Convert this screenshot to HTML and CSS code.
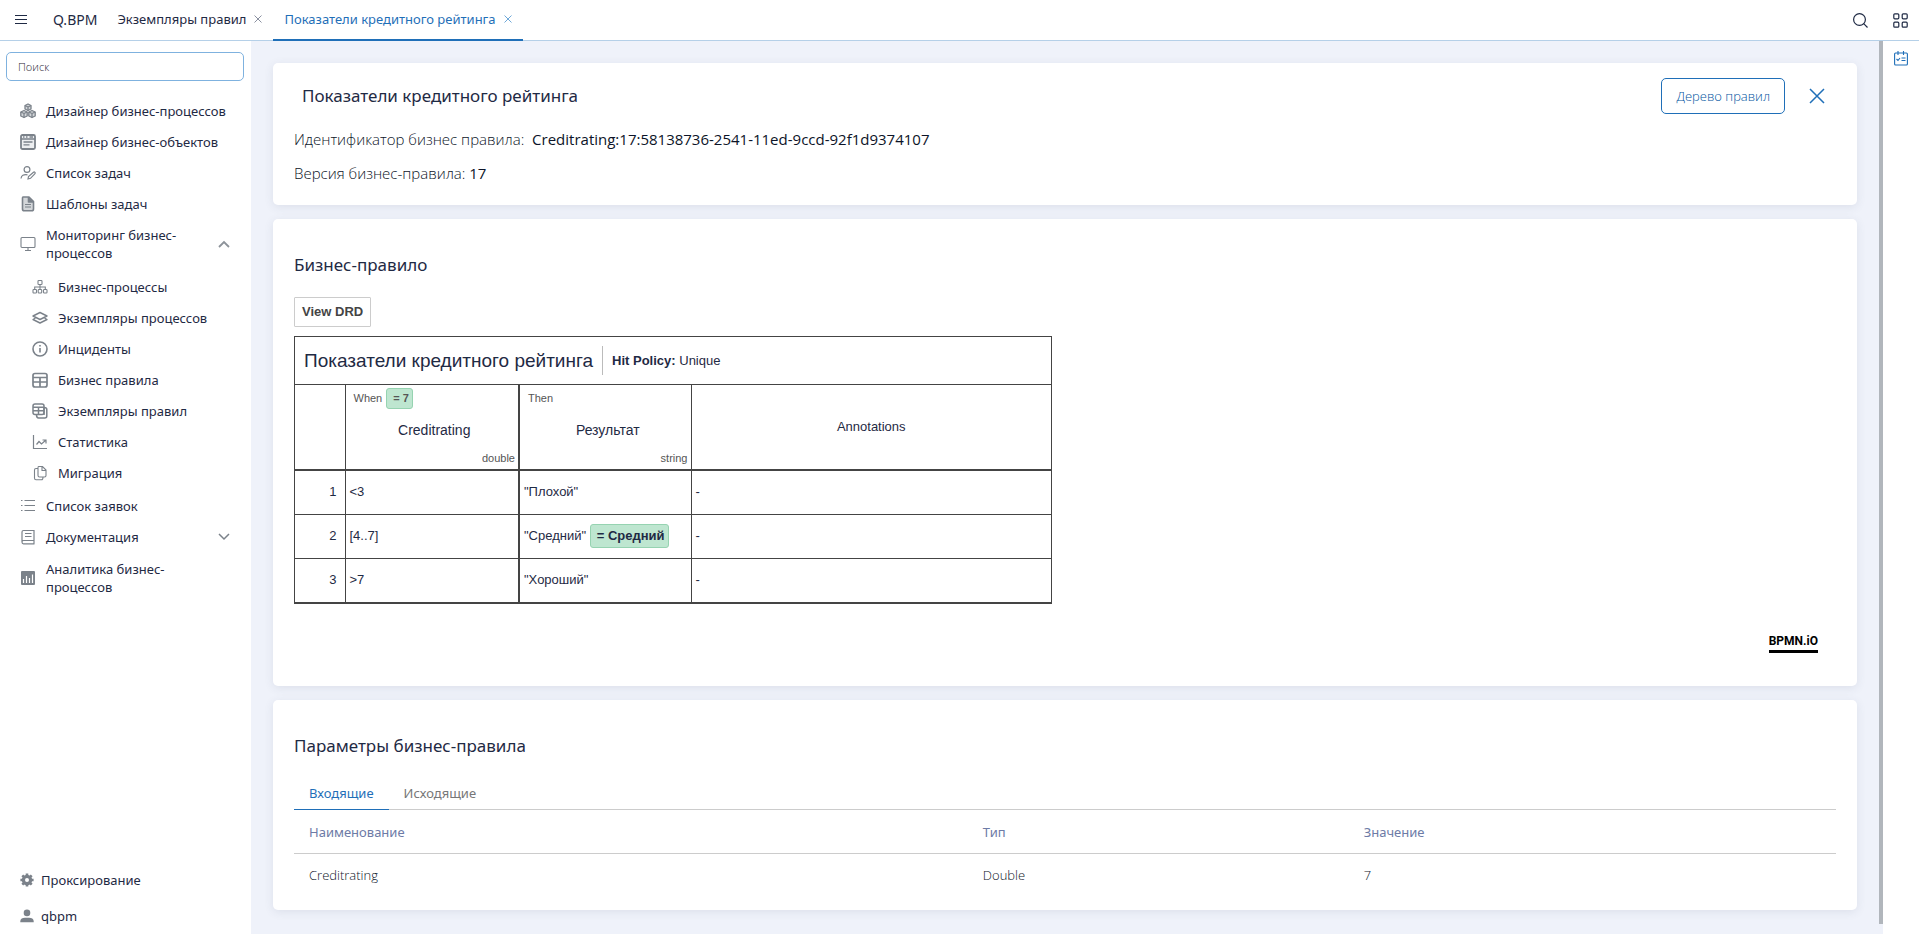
FILE: index.html
```html
<!DOCTYPE html>
<html lang="ru">
<head>
<meta charset="utf-8">
<title>Q.BPM</title>
<meta name="viewport" content="width=device-width, initial-scale=1">
<link rel="stylesheet" href="styles.css">
</head>
<body>
<div class="app">
  <header class="topbar">
    <button class="icon-btn menu-btn" aria-label="Меню"><svg width="12" height="10" viewBox="0 0 12 10"><path d="M0 .5h12M0 4.5h12M0 8.5h12" stroke="#1f2a44" fill="none"/></svg></button>
    <a class="brand" href="#">Q.BPM</a>
    <nav class="tabs">
      <div class="tab"><a href="#">Экземпляры правил</a><button class="icon-btn" aria-label="Закрыть вкладку"><svg width="8" height="8" viewBox="0 0 8 8"><path d="M.5.5l7 7M7.500.5l-7 7" stroke="#8a90a0" fill="none"/></svg></button></div>
      <div class="tab tab-active"><a href="#">Показатели кредитного рейтинга</a><button class="icon-btn" aria-label="Закрыть вкладку"><svg width="8" height="8" viewBox="0 0 8 8"><path d="M.5.5l7 7M7.500.5l-7 7" stroke="#6fa8d8" fill="none"/></svg></button></div>
    </nav>
    <div class="tools">
      <button class="icon-btn" aria-label="Поиск"><svg width="15" height="15" viewBox="0 0 15 15"><g stroke="#1f2a44" fill="none" stroke-width="1.2"><circle cx="6.500" cy="6.500" r="5.900"/><path d="M10.700 10.700l3.800 3.800"/></g></svg></button>
      <button class="icon-btn" aria-label="Приложения"><svg width="15" height="15" viewBox="0 0 15 15"><g stroke="#1f2a44" fill="none" stroke-width="1.200"><rect x=".8" y=".8" width="5" height="5" rx="1"/><rect x="9.200" y=".8" width="5" height="5" rx="1"/><rect x=".8" y="9.200" width="5" height="5" rx="1"/><rect x="9.200" y="9.200" width="5" height="5" rx="1"/></g></svg></button>
    </div>
  </header>

  <aside class="sidebar">
    <input class="search" type="search" placeholder="Поиск" aria-label="Поиск">
    <nav class="menu">
      <a class="item" href="#"><svg class="ico" viewBox="0 0 16 16"><g fill="#d3d6d9" stroke="#7b828a" stroke-width="1.300" stroke-linejoin="round"><path d="M8 1l3 1.500v3.500L8 7.500 5 6V2.500z"/><path d="M4 7.500L7.200 9v4L4 14.500.8 13V9z"/><path d="M12 7.500L15.200 9v4L12 14.500 8.800 13V9z"/><path d="M5 2.500L8 4l3-1.500M8 4v3.500M.8 9L4 10.500 7.200 9M4 10.500v4M8.800 9l3.200 1.500L15.200 9M12 10.500v4" fill="none"/></g></svg>Дизайнер бизнес-процессов</a>
      <a class="item" href="#"><svg class="ico" viewBox="0 0 16 16"><g fill="none" stroke="#7b828a" stroke-width="1.800"><rect x="1" y="1" width="14" height="14" rx="1.500" fill="#eceef0"/><path d="M1 5h14M3 3h1.500M6 3h1.500M9.500 3H13M3.500 8h9M3.500 10.800h6" stroke-width="1.300"/></g></svg>Дизайнер бизнес-объектов</a>
      <a class="item" href="#"><svg class="ico" viewBox="0 0 16 16"><g fill="none" stroke="#7b828a" stroke-width="1.200"><circle cx="7" cy="4.500" r="2.900"/><path d="M1 13.500c.3-3 2.500-4.200 6.500-3.700M8 14l.5-2.500 5-4.300c1-.8 2.300.6 1.300 1.600l-4.300 4.500z"/></g></svg>Список задач</a>
      <a class="item" href="#"><svg class="ico" viewBox="0 0 16 16"><g fill="#d3d6d9" stroke="#7b828a" stroke-width="1.600" stroke-linejoin="round"><path d="M3 1h6l4.500 4.500V13q0 1.800-1.800 1.800H4.300Q2.500 14.800 2.500 13V2q0-1 .5-1z"/><path d="M8.500 1v5h5" fill="#7b828a"/><path d="M5 8.500h6M5 11h6" stroke-width="1.100"/></g></svg>Шаблоны задач</a>
      <button class="item"><svg class="ico" viewBox="0 0 16 16"><g fill="none" stroke="#7b828a" stroke-width="1.100"><rect x="1" y="1.500" width="14" height="10" rx="1"/><path d="M8 11.500v3M5 14.500h6"/></g></svg><span class="item-text">Мониторинг бизнес-процессов</span><svg class="chev" viewBox="0 0 12 8"><path d="M1 7l5-5 5 5" fill="none" stroke="#8d939a" stroke-width="1.800"/></svg></button>
      <div class="submenu">
        <a class="item" href="#"><svg class="ico" viewBox="0 0 16 16"><g fill="none" stroke="#7b828a" stroke-width="1.100"><rect x="6" y="1.500" width="4" height="4" rx=".8"/><rect x="1" y="10.500" width="3.500" height="3.500" rx=".8"/><rect x="6.200" y="10.500" width="3.500" height="3.500" rx=".8"/><rect x="11.500" y="10.500" width="3.500" height="3.500" rx=".8"/><path d="M8 5.500v5M2.700 10.500V8h10.600v2.500"/></g></svg>Бизнес-процессы</a>
        <a class="item" href="#"><svg class="ico" viewBox="0 0 16 16"><g fill="none" stroke="#7b828a" stroke-width="1.400" stroke-linejoin="round"><path d="M8 2.500l7 3.500-7 3.500L1 6z"/><path d="M3.500 8L1 9.500 8 13l7-3.500L12.500 8"/></g></svg>Экземпляры процессов</a>
        <a class="item" href="#"><svg class="ico" viewBox="0 0 16 16"><g fill="none" stroke="#7b828a" stroke-width="1.600"><circle cx="8" cy="8" r="7"/><path d="M8 7v4.500M8 4v1.600"/></g></svg>Инциденты</a>
        <a class="item" href="#"><svg class="ico" viewBox="0 0 16 16"><g fill="none" stroke="#7b828a" stroke-width="1.700"><rect x="1" y="1.500" width="14" height="13.500" rx="2"/><path d="M1 5.500h14M1 10h14M8 5.500V15"/></g></svg>Бизнес правила</a>
        <a class="item" href="#"><svg class="ico" viewBox="0 0 16 16"><g fill="none" stroke="#7b828a" stroke-width="1.500"><rect x="1" y="1" width="11" height="10.500" rx="2"/><path d="M1 4.200h11M1 7.800h11M6.500 4.200v7.300M12.200 4.500q2.600 0 2.600 2V13q0 2-2 2H6.500q-2 0-2-3.200M12 4v8"/></g></svg>Экземпляры правил</a>
        <a class="item" href="#"><svg class="ico" viewBox="0 0 16 16"><g fill="none" stroke="#7b828a" stroke-width="1.200"><path d="M1.500 1v13.500H15M4.500 10.500l2.500-3 2.500 2.500L14 6M10.500 6H14v3.500"/></g></svg>Статистика</a>
        <a class="item" href="#"><svg class="ico" viewBox="0 0 16 16"><g fill="none" stroke="#7b828a" stroke-width="1.100"><path d="M6.500 1.500h4L14 5v5.500q0 1.500-1.500 1.500h-5Q6 12 6 10.500V3q0-1.500.500-1.500zM10 1.500V5.500h4M6 3.500H4Q2.500 3.500 2.500 5v8Q2.500 14.800 4 14.800h5.500Q11 14.800 11 12"/></g></svg>Миграция</a>
      </div>
      <a class="item" href="#"><svg class="ico" viewBox="0 0 16 16"><path d="M1 2.500h1.500M1 7.500h1.500M1 12.500h1.500M4.500 2.500H15M4.500 7.500H15M4.500 12.500H15" stroke="#7b828a" stroke-width="1.200" fill="none"/></svg>Список заявок</a>
      <button class="item"><svg class="ico" viewBox="0 0 16 16"><g fill="none" stroke="#7b828a" stroke-width="1.200"><path d="M14 11.500V1.500H3.500Q2 1.500 2 3v10q0 1.800 1.500 1.800H14.500M2 13q0-1.500 1.500-1.500H14v3.300M5 4.500h6.500M5 7.500h6.500"/></g></svg><span class="item-text">Документация</span><svg class="chev" viewBox="0 0 12 8"><path d="M1 1l5 5 5-5" fill="none" stroke="#7b828a" stroke-width="1.500"/></svg></button>
      <a class="item" href="#"><svg class="ico" viewBox="0 0 16 16"><rect x="1" y="1" width="14" height="14" rx="1" fill="#7b828a"/><path d="M3.500 13V9M6.500 13V6M9.500 13V8M12.500 13V4.500" stroke="#fff" stroke-width="1.200"/></svg><span class="item-text">Аналитика бизнес-процессов</span></a>
    </nav>
    <nav class="account">
      <a class="account-item" href="#"><svg class="ico-sm" viewBox="0 0 14 14"><circle cx="7" cy="7" r="3.600" fill="none" stroke="#7b828a" stroke-width="3.200"/><path d="M7 .4v3M7 10.600v3M.4 7h3M10.600 7h3M2.300 2.300l2 2M9.700 9.700l2 2M11.700 2.300l-2 2M4.300 9.700l-2 2" stroke="#7b828a" stroke-width="2.600"/></svg>Проксирование</a>
      <a class="account-item" href="#"><svg class="ico-sm" viewBox="0 0 14 14"><circle cx="7" cy="3.900" r="3.300" fill="#7b828a"/><path d="M.3 13.300V12Q.8 8.800 5 8.800h4q4.200 0 4.700 3.200v1.300z" fill="#7b828a"/></svg>qbpm</a>
    </nav>
  </aside>

  <main class="content">
    <section class="card card-info">
      <div class="info-head">
        <h1 class="title">Показатели кредитного рейтинга</h1>
        <button class="outline-btn">Дерево правил</button>
        <button class="icon-btn" aria-label="Закрыть"><svg width="16" height="16" viewBox="0 0 16 16"><path d="M1 1l14 14M15 1L1 15" stroke="#1f6fb8" stroke-width="1.500" fill="none"/></svg></button>
      </div>
      <p class="fact">Идентификатор бизнес правила: <b class="fact-id">Creditrating:17:58138736-2541-11ed-9ccd-92f1d9374107</b></p>
      <p class="fact">Версия бизнес-правила: <b>17</b></p>
    </section>

    <section class="card card-rule">
      <h2 class="title">Бизнес-правило</h2>
      <button class="drd-btn">View DRD</button>
      <div class="dmn">
        <div class="dmn-head">
          <span class="dmn-name">Показатели кредитного рейтинга</span>
          <span class="hit"><b>Hit Policy:</b> Unique</span>
        </div>
        <table class="dmn-table">
          <colgroup><col class="c-num"><col class="c-in"><col class="c-out"><col></colgroup>
          <thead>
            <tr>
              <th></th>
              <th><div class="clause"><span class="clause-kind">When <span class="badge badge-sm">= 7</span></span><span class="clause-name">Creditrating</span><span class="clause-type">double</span></div></th>
              <th><div class="clause"><span class="clause-kind">Then</span><span class="clause-name">Результат</span><span class="clause-type">string</span></div></th>
              <th>Annotations</th>
            </tr>
          </thead>
          <tbody>
            <tr><td class="num">1</td><td>&lt;3</td><td>"Плохой"</td><td>-</td></tr>
            <tr><td class="num">2</td><td>[4..7]</td><td>"Средний" <span class="badge">= Средний</span></td><td>-</td></tr>
            <tr><td class="num">3</td><td>&gt;7</td><td>"Хороший"</td><td>-</td></tr>
          </tbody>
        </table>
      </div>
      <a class="bpmn" href="#">BPMN.iO</a>
    </section>

    <section class="card card-params">
      <h2 class="title">Параметры бизнес-правила</h2>
      <div class="ptabs" role="tablist">
        <button class="ptab ptab-active" role="tab" aria-selected="true">Входящие</button>
        <button class="ptab" role="tab" aria-selected="false">Исходящие</button>
      </div>
      <table class="params">
        <colgroup><col class="p-name"><col class="p-type"><col></colgroup>
        <thead><tr><th>Наименование</th><th>Тип</th><th>Значение</th></tr></thead>
        <tbody><tr><td>Creditrating</td><td>Double</td><td>7</td></tr></tbody>
      </table>
    </section>
  </main>
  <div class="scroll"><div class="thumb"></div></div>

  <aside class="rail">
    <button class="icon-btn" aria-label="Задачи"><svg width="14" height="15" viewBox="0 0 14 15"><g fill="none" stroke="#1f6fb8" stroke-width="1.100"><rect x=".6" y="2" width="12.800" height="12" rx="1"/><path d="M4 0v4M9.500 0v4M2.500 8l1.500 1.500L6 7M7.500 7h4M7.500 9.500h4"/></g></svg></button>
  </aside>
</div>
</body>
</html>
```
FILE: styles.css
```css
* { box-sizing: border-box; }
body {
  margin: 0;
  font-family: "Noto Sans", "Open Sans", sans-serif;
  font-size: 13px;
  line-height: 18px;
  color: #1f2a44;
  background: #fff;
}
a { color: inherit; text-decoration: none; }
button { font: inherit; color: inherit; background: none; border: 0; padding: 0; cursor: pointer; }
svg { display: block; flex: none; }
.app {
  display: grid;
  grid-template: 41px 1fr / 251px 1fr 4px 36px;
  height: 100vh;
}

/* Top bar */
.topbar {
  grid-column: 1 / -1;
  display: flex;
  align-items: center;
  padding: 0 11px 0 15px;
  border-bottom: 1px solid #b5d0e8;
}
.icon-btn { display: flex; }
.menu-btn { margin-right: 26px; }
.brand { padding-bottom: 1px; font-size: 14px; }
.tabs { display: flex; margin-left: 9px; }
.tab {
  display: flex;
  align-items: center;
  gap: 8px;
  height: 41px;
  padding: 0 11px;
  border-bottom: 2px solid transparent;
}
.tab-active { color: #1f6fb8; border-color: #1f6fb8; }
.tools { display: flex; gap: 25px; margin-left: auto; }

/* Sidebar */
.sidebar { display: flex; flex-direction: column; padding: 11px 7px 0 6px; }
.search {
  height: 29px;
  padding: 0 11px;
  border: 1px solid #7fb2df;
  border-radius: 5px;
  font: 300 11px/16px "Open Sans", "Noto Sans", sans-serif;
  color: #1f2a44;
}
.search::placeholder { color: #1f2433; opacity: 1; }
.menu { display: flex; flex-direction: column; padding-top: 14px; }
.item {
  display: flex;
  align-items: center;
  gap: 10px;
  min-height: 31px;
  padding: 6px 14px;
  text-align: left;
}
.item-text { width: 150px; padding: 1px 0; }
.ico { width: 16px; height: 16px; }
.chev { width: 12px; height: 8px; margin-left: auto; }
.submenu { padding: 2px 0 2px 12px; }
.account { display: flex; flex-direction: column; margin-top: auto; }
.account-item { display: flex; align-items: center; gap: 7px; height: 36px; padding: 0 14px; }
.ico-sm { width: 14px; height: 14px; }

/* Content */
.content {
  display: flex;
  flex-direction: column;
  gap: 14px;
  padding: 22px 22px 0;
  background: #eff2fa;
  overflow: hidden;
}
.card {
  padding: 0 21px;
  border-radius: 5px;
  background: #fff;
  box-shadow: 0 2px 10px rgba(60, 70, 100, .1);
}
.title { margin: 0; font-size: 17px; font-weight: 400; line-height: 24px; }
.info-head { display: flex; align-items: center; gap: 24px; height: 66px; padding: 0 11px 0 8px; }
.info-head .title { margin-right: auto; }
.outline-btn {
  height: 36px;
  padding: 0 14px;
  border: 1px solid #1f6fb8;
  border-radius: 5px;
  font-family: "Open Sans", sans-serif;
  font-weight: 300;
  color: #0054a0;
}
.fact {
  margin: 0 0 14px;
  font: 300 15px/20px "Open Sans", "Noto Sans", sans-serif;
  color: #0c1428;
}
.fact b { font: 400 15px/20px "Open Sans", "Noto Sans", sans-serif; }
.fact-id { margin-left: 4px; }
.card-info { padding-bottom: 8px; }
.card-rule { padding-top: 34px; padding-bottom: 33px; }
.drd-btn {
  display: block;
  margin: 20px 0 9px;
  height: 30px;
  padding: 0 7px;
  border: 1px solid #ccc;
  border-radius: 1px;
  font: bold 13px/18px "Liberation Sans", Arial, sans-serif;
  color: #444;
}

/* Decision table */
.dmn {
  width: 758px;
  max-width: 100%;
  border: 1px solid #444;
  border-bottom-width: 2px;
  font-family: "Liberation Sans", Arial, sans-serif;
}
.dmn-head { display: flex; align-items: center; height: 48px; padding-left: 9px; border-bottom: 1px solid #444; }
.dmn-name { font-size: 19px; padding-right: 9px; }
.hit { padding: 5px 9px; border-left: 1px solid #bbb; line-height: 19px; font-size: 13px; }
.dmn-table { width: 100%; border-collapse: collapse; table-layout: fixed; font-size: 13px; }
.c-num { width: 50px; }
.c-in { width: 174px; }
.c-out { width: 172px; }
.dmn-table th { height: 85px; padding: 0; font-weight: 400; border-bottom: 2px solid #444; }
.dmn-table td { height: 44px; padding: 0 4px; border-top: 1px solid #444; }
.dmn-table tr > * + * { border-left: 1px solid #444; }
.dmn-table tr > :nth-child(3) { border-left-width: 2px; }
.dmn-table .num { text-align: right; padding-right: 8px; }
.clause { display: flex; flex-direction: column; justify-content: space-between; height: 83px; padding: 2px 3px 3px 8px; }
.clause-kind { display: flex; align-items: center; gap: 4px; height: 21px; font-size: 11px; color: #555; }
.clause-name { text-align: center; font-size: 14px; }
.clause-type { text-align: right; font-size: 11px; line-height: 15px; color: #555; }
.badge {
  display: inline-block;
  padding: 2px 3px 2px 6px;
  border: 1px solid #96d3b1;
  border-radius: 3px;
  background: #bee6d0;
  font-weight: 700;
}
.badge-sm { line-height: 15px; }
.bpmn {
  display: block;
  width: max-content;
  margin: 28px 18px 0 auto;
  border-bottom: 3px solid #000;
  font: bold 12px/18px "Roboto", "Liberation Sans", sans-serif;
  color: #000;
}

/* Parameters */
.card-params { padding-top: 34px; padding-bottom: 14px; }
.ptabs { display: flex; margin-top: 18px; border-bottom: 1px solid #ccc; }
.ptab { height: 34px; padding: 0 15px; margin-bottom: -1px; border-bottom: 1px solid transparent; color: #777; }
.ptab-active { color: #1f6fb8; border-color: #1f6fb8; }
.params { width: 100%; border-collapse: separate; border-spacing: 0; table-layout: fixed; }
.p-name { width: 43.700%; }
.p-type { width: 24.700%; }
.params th { height: 44px; padding: 0 15px; text-align: left; font-weight: 400; color: #6d7ba6; border-bottom: 1px solid #ccc; }
.params td { height: 42px; padding: 0 15px; font-family: "Open Sans", sans-serif; font-weight: 300; color: #0c1428; }

/* Scrollbar and right rail */
.scroll { background: #eff2fa; padding-bottom: 10px; }
.thumb { height: 100%; background: #b1b6bc; }
.rail { display: flex; flex-direction: column; align-items: center; padding: 10px 0 0 0; }
```
